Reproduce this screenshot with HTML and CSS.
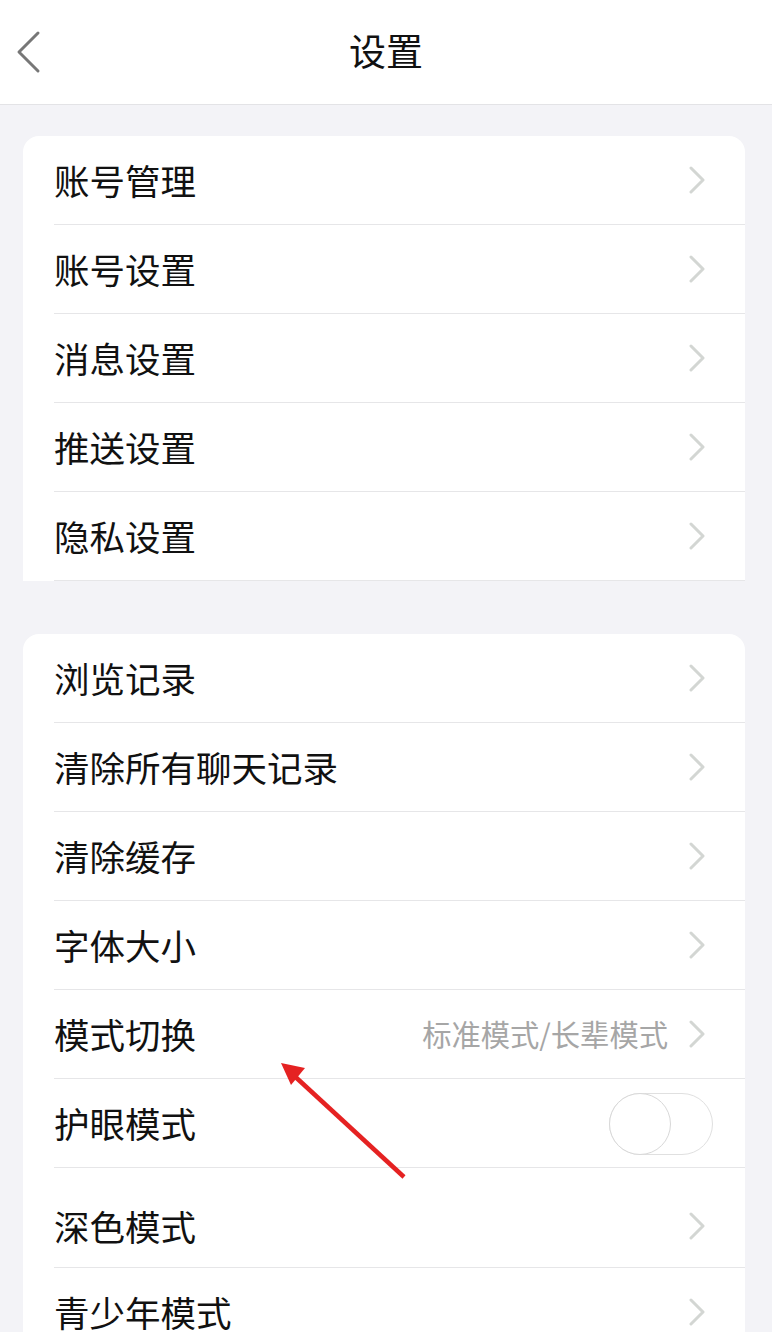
FILE: index.html
```html
<!doctype html>
<html lang="zh-CN">
	<head>
		<meta charset="UTF-8" />
		<title>设置</title>
		<link rel="stylesheet" href="styles.css">
	</head>
	<body>
		<div class="page">
			<div class="header">
				<svg class="back" width="30" height="44" viewBox="0 0 30 44">
					<path d="M24 3 L5 22 L24 41" fill="none" stroke="#777" stroke-width="3" stroke-linecap="round" stroke-linejoin="round" />
				</svg>
				<div class="title">设置</div>
			</div>

			<div class="group group-first">
				<div class="row"><span class="label">账号管理</span><span class="chevron"></span></div>
				<div class="row"><span class="label">账号设置</span><span class="chevron"></span></div>
				<div class="row"><span class="label">消息设置</span><span class="chevron"></span></div>
				<div class="row"><span class="label">推送设置</span><span class="chevron"></span></div>
				<div class="row"><span class="label">隐私设置</span><span class="chevron"></span></div>
			</div>

			<div class="group group-second">
				<div class="row"><span class="label">浏览记录</span><span class="chevron"></span></div>
				<div class="row"><span class="label">清除所有聊天记录</span><span class="chevron"></span></div>
				<div class="row"><span class="label">清除缓存</span><span class="chevron"></span></div>
				<div class="row"><span class="label">字体大小</span><span class="chevron"></span></div>
				<div class="row">
					<span class="label">模式切换</span>
					<span class="value">标准模式/长辈模式</span>
					<span class="chevron"></span>
				</div>
				<div class="row">
					<span class="label">护眼模式</span>
					<span class="switch"><span class="knob"></span></span>
				</div>
				<div class="row row-tall"><span class="label">深色模式</span><span class="chevron"></span></div>
				<div class="row"><span class="label">青少年模式</span><span class="chevron"></span></div>
			</div>

			<svg class="pointer" width="160" height="140" viewBox="0 0 160 140">
				<line x1="143" y1="127" x2="28" y2="21" stroke="#e52222" stroke-width="4.5" />
				<polygon points="20,13 44,18 30,35" fill="#e52222" />
			</svg>
		</div>
	</body>
</html>
```

FILE: styles.css
```css
html,
body {
	margin: 0;
	padding: 0;
}
body {
	font-family: "Noto Sans CJK SC", "Noto Sans", sans-serif;
	background-color: #f3f3f7;
	color: #111;
	overflow: hidden;
}
.page {
	position: relative;
	height: 1332px;
	overflow: hidden;
}
.header {
	position: relative;
	height: 104px;
	background-color: white;
	border-bottom: 1px solid #e3e3e6;
	display: flex;
	align-items: center;
	justify-content: center;
}
.back {
	position: absolute;
	left: 14px;
	top: 30px;
}
.title {
	font-size: 37px;
	line-height: 1;
	margin-top: -4px;
}
.group {
	margin: 0 27px 0 23px;
	background-color: white;
}
.group-first {
	margin-top: 31px;
	border-radius: 16px 16px 0 0;
}
.group-second {
	margin-top: 53px;
	border-radius: 16px;
}
.row {
	display: flex;
	align-items: center;
	height: 88px;
	margin-left: 31px;
	padding-right: 40px;
	border-bottom: 1px solid #e6e6e8;
}
.row-tall {
	height: 83px;
	padding-top: 16px;
}
.label {
	flex: 1;
	font-size: 35.5px;
	line-height: 1;
}
.value {
	font-size: 29.3px;
	color: #a6a6a6;
	margin-right: 21px;
	line-height: 1;
}
.chevron {
	width: 16px;
	height: 28px;
	background: no-repeat center / 16px 28px url("data:image/svg+xml;utf8,<svg xmlns='http://www.w3.org/2000/svg' width='16' height='28' viewBox='0 0 16 28'><path d='M2 2 L14 14 L2 26' fill='none' stroke='%23d3d6d3' stroke-width='3' stroke-linecap='round' stroke-linejoin='round'/></svg>");
}
.switch {
	position: relative;
	box-sizing: border-box;
	width: 104px;
	height: 62px;
	margin-right: -8px;
	margin-top: 2px;
	border: 1.5px solid #e0e0e0;
	border-radius: 31px;
	background-color: white;
}
.knob {
	position: absolute;
	left: -1.5px;
	top: -1.5px;
	box-sizing: border-box;
	width: 62px;
	height: 62px;
	border: 1.5px solid #d8d8d8;
	border-radius: 50%;
	background-color: white;
}
.pointer {
	position: absolute;
	left: 261px;
	top: 1050px;
}
```
